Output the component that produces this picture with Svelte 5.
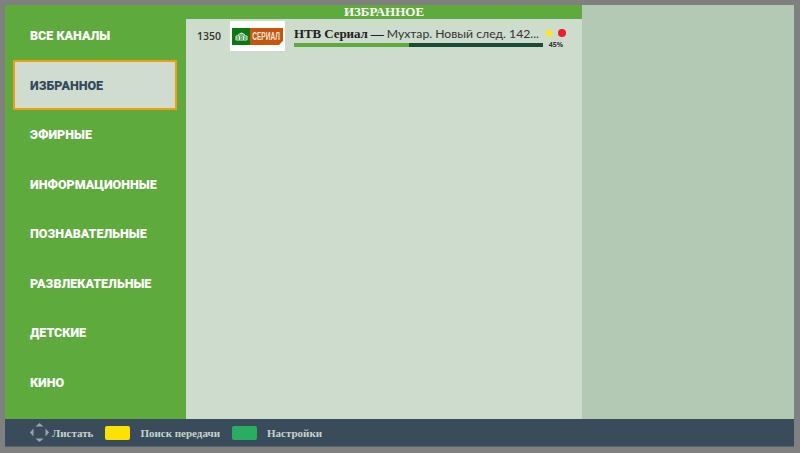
<script>
    const categories = [
        "Все каналы",
        "Избранное",
        "Эфирные",
        "Информационные",
        "Познавательные",
        "Развлекательные",
        "Детские",
        "Кино",
    ];
    const selected = 1;
    const progress = 46;
</script>

<div class="screen">
    <div class="main">
        <nav class="menu">
            {#each categories as name, i}
                <div class="menu-item {i === selected ? 'active' : ''}">{name}</div>
            {/each}
        </nav>

        <section class="list">
            <h1>ИЗБРАННОЕ</h1>
            <div class="channel">
                <span class="num">1350</span>
                <div class="logo">
                    <div class="logo-green">
                        <svg width="13" height="9" viewBox="0 0 13 9">
                            <path d="M1 8V4h11v4zM3 4l1-2h5l1 2M5 2l1-1h1l1 1M1 6h11M4.500 4v4M8.500 4v4" fill="none" stroke="#d8ecd8" stroke-width="1" />
                        </svg>
                    </div>
                    <div class="logo-orange"><span>СЕРИАЛ</span></div>
                </div>
                <div class="info">
                    <div class="title">
                        <b>НТВ Сериал —</b>
                        <span>Мухтар. Новый след. 142...</span>
                    </div>
                    <div class="bar"><div class="fill" style="width: {progress}%"></div></div>
                </div>
                <div class="marks">
                    <div class="icons">
                        <svg width="10" height="10" viewBox="0 0 10 10">
                            <path d="M5 0l1.500 3.300H10L7.300 5.700l1 4.100L5 7.600 1.700 9.800l1-4.100L0 3.300h3.500z" fill="#ffe81a" />
                        </svg>
                        <span class="dot"></span>
                    </div>
                    <span class="pct">45%</span>
                </div>
            </div>
        </section>

        <aside class="side"></aside>
    </div>

    <footer class="hints">
        <svg class="dpad" width="21" height="21" viewBox="0 0 21 21">
            <path d="M10.500 1l4 3.500h-8zM10.500 20l4-3.500h-8zM1 10.500l3.500-4v8zM20 10.500l-3.500-4v8z" fill="#9aa6ae" />
        </svg>
        <span class="hint first">Листать</span>
        <span class="key yellow"></span>
        <span class="hint">Поиск передачи</span>
        <span class="key green"></span>
        <span class="hint">Настройки</span>
    </footer>
</div>

<style>
    :global(body) {
        background: #808080;
    }

    .screen {
        width: 789px;
        height: 442px;
        padding: 5px 6px 6px 5px;
        display: flex;
        flex-direction: column;
        background: #808080;
    }

    .main {
        flex: 1;
        min-height: 0;
        display: flex;
    }

    .menu {
        width: 181px;
        background: #5faa3d;
        padding-top: 5px;
        display: flex;
        flex-direction: column;
    }

    .menu-item {
        height: 49.500px;
        margin: 0 9px 0 8px;
        padding: 1px 0 0 17px;
        box-sizing: border-box;
        display: flex;
        align-items: center;
        font-family: Roboto, sans-serif;
        font-weight: 900;
        font-size: 12.500px;
        text-transform: uppercase;
        color: #fff;
    }

    .menu-item.active {
        height: 50px;
        padding-left: 15px;
        background: #cfdccf;
        border: 2px solid #f39c12;
        color: #34495e;
    }

    .list {
        width: 396px;
        background: #cedccd;
    }

    h1 {
        margin: 0;
        height: 14px;
        background: #5faa3d;
        color: #fff;
        text-align: center;
        font-family: "Liberation Serif", serif;
        font-weight: 700;
        font-size: 13px;
        line-height: 14px;
    }

    .channel {
        display: flex;
        align-items: flex-start;
        padding-top: 2px;
    }

    .num {
        width: 44px;
        padding: 8px 0 0 11px;
        box-sizing: border-box;
        font-family: "Open Sans", sans-serif;
        font-weight: 600;
        font-size: 10.500px;
        line-height: 15px;
        color: #333;
    }

    .logo {
        width: 55px;
        height: 30px;
        background: #fff;
        padding: 7px 2px;
        box-sizing: border-box;
        display: flex;
    }

    .logo-green {
        width: 18px;
        height: 17px;
        background: #0b7a12;
        display: flex;
        align-items: center;
        justify-content: center;
    }

    .logo-orange {
        width: 33px;
        height: 17px;
        background: #c4560f;
        display: flex;
        align-items: center;
        justify-content: center;
        clip-path: polygon(0 0, 100% 0, 100% 75%, 88% 100%, 0 100%);
    }

    .logo-orange span {
        color: #f6e6d8;
        font-family: "Liberation Sans", sans-serif;
        font-weight: 700;
        font-size: 10px;
        transform: scaleX(0.66);
    }

    .info {
        width: 249px;
        margin-left: 9px;
    }

    .title {
        height: 19px;
        padding-top: 3px;
        white-space: nowrap;
        line-height: 18px;
    }

    .title b {
        font-family: "Liberation Serif", serif;
        font-size: 13px;
        color: #222;
        letter-spacing: -0.100px;
    }

    .title span {
        margin-left: -1px;
        font-family: Lato, sans-serif;
        font-size: 12.200px;
        color: #333;
    }

    .bar {
        height: 4px;
        background: #1c4a34;
    }

    .fill {
        height: 100%;
        background: #5faa3d;
    }

    .marks {
        width: 26px;
        padding-top: 7px;
        display: flex;
        flex-direction: column;
        align-items: center;
    }

    .icons {
        display: flex;
        align-items: center;
        gap: 4px;
        margin-left: -2px;
    }

    .dot {
        width: 8px;
        height: 8px;
        border-radius: 50%;
        background: #ee1c25;
    }

    .pct {
        margin-top: 3px;
        font-family: "Open Sans", sans-serif;
        font-weight: 700;
        font-size: 7px;
        line-height: 8px;
        color: #333;
    }

    .side {
        flex: 1;
        background: #b4c9b4;
    }

    .hints {
        height: 28px;
        background: #3a4c5c;
        border-bottom: 1px solid #55636c;
        box-sizing: border-box;
        padding-left: 24px;
        display: flex;
        align-items: center;
    }

    .dpad {
        flex: none;
    }

    .hint {
        font-family: "Liberation Serif", serif;
        font-weight: 700;
        font-size: 11px;
        color: #c5d5cf;
        white-space: nowrap;
    }

    .hint.first {
        margin-left: 2px;
    }

    .key {
        width: 25px;
        height: 14px;
        border-radius: 2px;
        margin: 0 10px 0 12px;
    }

    .yellow {
        background: #ffe100;
    }

    .green {
        background: #27ae60;
    }
</style>
